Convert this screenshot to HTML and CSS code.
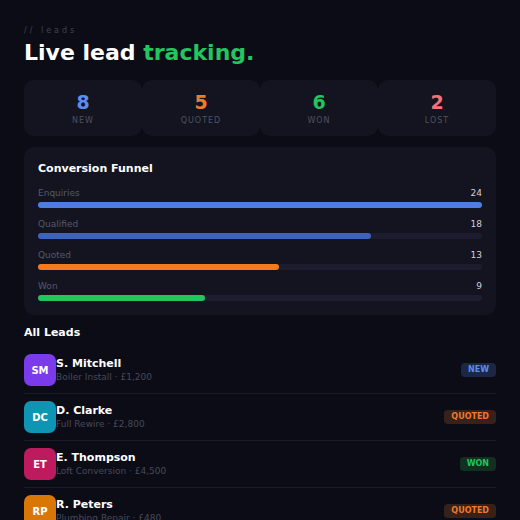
FILE: index.html
```html
<!DOCTYPE html>
<html lang="en">
<head>
<meta charset="UTF-8">
<meta name="viewport" content="width=device-width, initial-scale=1.0">
<title>Leads</title>
<link rel="stylesheet" href="styles.css">
</head>
<body>

<div class="page">
  <!-- header -->
  <div class="eyebrow">// leads</div>
  <h1 class="title">Live lead <span class="accent">tracking.</span></h1>

  <!-- stats -->
  <div class="stats">
    <div class="stat"><div class="stat-num blue">8</div><div class="stat-label">NEW</div></div>
    <div class="stat"><div class="stat-num orange">5</div><div class="stat-label">QUOTED</div></div>
    <div class="stat"><div class="stat-num green">6</div><div class="stat-label">WON</div></div>
    <div class="stat"><div class="stat-num red">2</div><div class="stat-label">LOST</div></div>
  </div>

  <!-- funnel -->
  <div class="funnel">
    <div class="funnel-title">Conversion Funnel</div>
    <div class="funnel-row">
      <div class="funnel-head"><span>Enquiries</span><span class="count">24</span></div>
      <div class="track"><div class="fill fill-blue" style="width: 100%"></div></div>
    </div>
    <div class="funnel-row">
      <div class="funnel-head"><span>Qualified</span><span class="count">18</span></div>
      <div class="track"><div class="fill fill-indigo" style="width: 75%"></div></div>
    </div>
    <div class="funnel-row">
      <div class="funnel-head"><span>Quoted</span><span class="count">13</span></div>
      <div class="track"><div class="fill fill-orange" style="width: 54.17%"></div></div>
    </div>
    <div class="funnel-row">
      <div class="funnel-head"><span>Won</span><span class="count">9</span></div>
      <div class="track"><div class="fill fill-green" style="width: 37.5%"></div></div>
    </div>
  </div>

  <!-- leads list -->
  <div class="section-title">All Leads</div>
  <div class="leads">
    <div class="lead">
      <div class="avatar av-purple">SM</div>
      <div class="lead-info">
        <div class="lead-name">S. Mitchell</div>
        <div class="lead-sub">Boiler Install · £1,200</div>
      </div>
      <span class="badge badge-new">NEW</span>
    </div>
    <div class="lead">
      <div class="avatar av-cyan">DC</div>
      <div class="lead-info">
        <div class="lead-name">D. Clarke</div>
        <div class="lead-sub">Full Rewire · £2,800</div>
      </div>
      <span class="badge badge-quoted">QUOTED</span>
    </div>
    <div class="lead">
      <div class="avatar av-pink">ET</div>
      <div class="lead-info">
        <div class="lead-name">E. Thompson</div>
        <div class="lead-sub">Loft Conversion · £4,500</div>
      </div>
      <span class="badge badge-won">WON</span>
    </div>
    <div class="lead">
      <div class="avatar av-amber">RP</div>
      <div class="lead-info">
        <div class="lead-name">R. Peters</div>
        <div class="lead-sub">Plumbing Repair · £480</div>
      </div>
      <span class="badge badge-quoted">QUOTED</span>
    </div>
  </div>
</div>

</body>
</html>
```

FILE: styles.css
```css
body {
  margin: 0;
  background-color: #0c0c16;
  font-family: "DejaVu Sans", sans-serif;
  color: #fff;
}
.page {
  padding: 24px;
}
.eyebrow {
  font-size: 8px;
  letter-spacing: 3px;
  color: #414252;
  line-height: 12px;
  margin-top: 1px;
}
.title {
  margin: 3px 0 14px;
  font-size: 22px;
  line-height: 26px;
  font-weight: bold;
}
.accent {
  color: #22c55e;
}
.stats {
  display: grid;
  grid-template-columns: repeat(4, 1fr);
}
.stat {
  background-color: #13141f;
  border-radius: 10px;
  height: 56px;
  display: flex;
  flex-direction: column;
  align-items: center;
  justify-content: center;
}
.stat-num {
  font-size: 19px;
  font-weight: bold;
  line-height: 22px;
}
.stat-label {
  font-size: 8px;
  letter-spacing: 1px;
  color: #4f5262;
  margin-top: 3px;
}
.blue { color: #5b8def; }
.orange { color: #f07a2a; }
.green { color: #22c55e; }
.red { color: #f47174; }
.funnel {
  margin-top: 11px;
  background-color: #13141f;
  border-radius: 10px;
  padding: 15px 14px 14px;
}
.funnel-title {
  font-size: 11px;
  font-weight: bold;
  line-height: 14px;
  margin-bottom: 11px;
}
.funnel-row {
  margin-bottom: 10px;
}
.funnel-row:last-child {
  margin-bottom: 0;
}
.funnel-head {
  display: flex;
  justify-content: space-between;
  font-size: 9px;
  line-height: 12px;
  color: #555a6b;
  margin-bottom: 3px;
}
.count {
  color: #d0d2da;
}
.track {
  height: 6px;
  border-radius: 3px;
  background-color: #1c1e30;
}
.fill {
  height: 6px;
  border-radius: 3px;
}
.fill-blue { background-color: #4b7ee0; }
.fill-indigo { background-color: #3e63bd; }
.fill-orange { background-color: #f47a22; }
.fill-green { background-color: #22c55e; }
.section-title {
  margin-top: 11px;
  font-size: 11px;
  font-weight: bold;
  line-height: 14px;
}
.leads {
  margin-top: 7px;
}
.lead {
  display: flex;
  align-items: center;
  padding: 7px 0;
  border-bottom: 1px solid #1a1b27;
}
.avatar {
  width: 32px;
  height: 32px;
  border-radius: 7px;
  display: flex;
  align-items: center;
  justify-content: center;
  font-size: 10px;
  font-weight: bold;
  flex-shrink: 0;
}
.av-purple { background-color: #7c3aed; }
.av-cyan { background-color: #0e95b3; }
.av-pink { background-color: #be1a5e; }
.av-amber { background-color: #d97706; }
.lead-info {
  flex: 1;
}
.lead-name {
  font-size: 11px;
  font-weight: bold;
  line-height: 14px;
}
.lead-sub {
  font-size: 9px;
  line-height: 12px;
  color: #474a59;
}
.badge {
  font-size: 8px;
  font-weight: bold;
  padding: 3px 7px;
  border-radius: 4px;
  line-height: 8px;
}
.badge-new { background-color: #1b2745; color: #5b8def; }
.badge-quoted { background-color: #36221a; color: #f07a2a; }
.badge-won { background-color: #11301f; color: #22c55e; }
```
